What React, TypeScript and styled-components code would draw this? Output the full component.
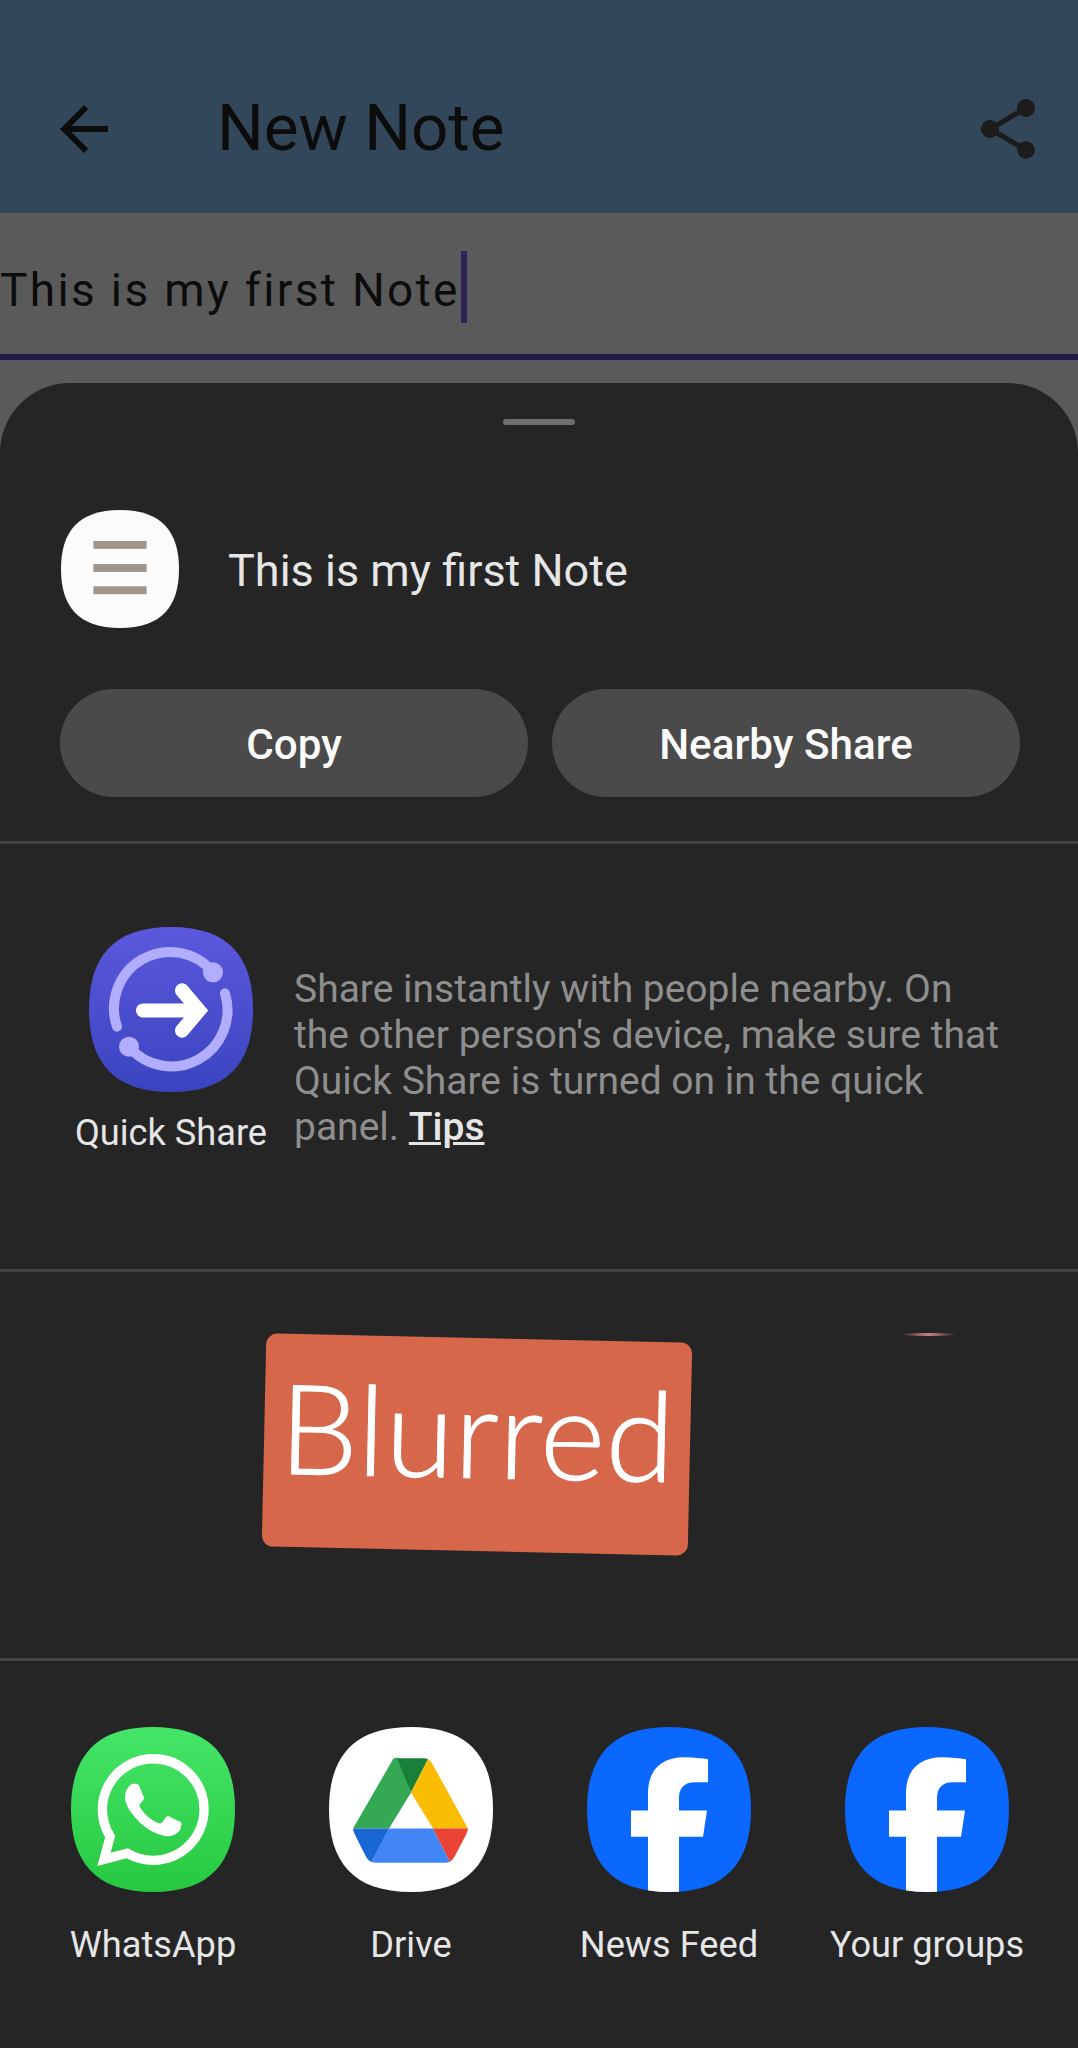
import styled, { createGlobalStyle } from "styled-components";
import { ReactNode } from "react";
import { MdArrowBack, MdShare } from "react-icons/md";
import { SiWhatsapp } from "react-icons/si";

const GlobalStyle = createGlobalStyle`
  html, body {
    margin: 0;
    padding: 0;
    background: #252525;
  }
  * {
    box-sizing: border-box;
  }
`;

const Screen = styled.div`
  width: 1078px;
  height: 2048px;
  display: flex;
  flex-direction: column;
  overflow: hidden;
  background: #5a5a5a;
  font-family: Roboto, "Liberation Sans", sans-serif;
`;

const Toolbar = styled.header`
  height: 213px;
  flex: none;
  display: flex;
  align-items: center;
  padding: 45px 34px 0 48px;
  background: #324759;
  color: #0c0c0c;
`;

const ToolbarTitle = styled.h1`
  flex: 1;
  margin: -3px 0 0 97px;
  font-size: 65.6px;
  font-weight: 400;
  line-height: 76px;
`;

const ShareIcon = styled(MdShare)`
  color: #1c1c1c;
`;

const NoteField = styled.div`
  height: 147px;
  flex: none;
  display: flex;
  align-items: center;
  padding-top: 12px;
  border-bottom: 6px solid #241a47;
  color: #0c0c0c;
  font-size: 46px;
  letter-spacing: 2.35px;
`;

const Caret = styled.span`
  width: 6px;
  height: 72px;
  margin: 0 0 6px 1px;
  background: #2f2358;
`;

const Sheet = styled.section`
  flex: 1;
  margin-top: 23px;
  display: flex;
  flex-direction: column;
  background: #252525;
  border-radius: 70px 70px 0 0;
`;

const Handle = styled.div`
  width: 72px;
  height: 6px;
  margin: 36px auto 0;
  border-radius: 3px;
  background: #6e6e6e;
`;

const PreviewRow = styled.div`
  margin-top: 85px;
  padding: 0 60px 0 61px;
  display: flex;
  align-items: center;
  gap: 49px;

  svg {
    display: block;
  }
`;

const PreviewText = styled.div`
  padding-top: 2px;
  color: #e6e6e6;
  font-size: 45px;
`;

const ActionRow = styled.div`
  margin: 61px 0 44px;
  padding: 0 58px 0 60px;
  display: grid;
  grid-template-columns: 1fr 1fr;
  gap: 24px;
`;

const ActionButton = styled.button`
  height: 108px;
  padding: 2px 0 0;
  border: none;
  border-radius: 54px;
  background: #4a4a4a;
  color: #fafafa;
  font-family: inherit;
  font-size: 42.2px;
  font-weight: 500;
`;

const Divider = styled.hr`
  flex: none;
  width: 100%;
  height: 3px;
  margin: 0;
  border: none;
  background: #434343;
`;

const NearbyPanel = styled.div`
  height: 425px;
  padding: 83px 70px 0 76px;
  display: flex;
  gap: 28px;
`;

const NearbyApp = styled.div`
  width: 190px;
  flex: none;
  display: flex;
  flex-direction: column;
  align-items: center;
  gap: 19px;
`;

const AppLabel = styled.div`
  color: #e6e6e6;
  font-size: 36.2px;
  line-height: 44px;
  white-space: nowrap;
`;

const NearbyText = styled.p`
  margin: 39px 0 0;
  color: #8e8e8e;
  font-size: 39px;
  line-height: 46px;
`;

const TipsLink = styled.a`
  color: #e6e6e6;
  font-weight: 500;
  text-decoration: underline;
`;

const SuggestionPanel = styled.div`
  height: 386px;
  position: relative;
  padding: 66px 0 0 264px;
`;

const BlurredCard = styled.div`
  width: 426px;
  height: 213px;
  padding-top: 17px;
  text-align: center;
  background: #d6674a;
  border-radius: 11px;
  color: #fff;
  font-family: Lato, sans-serif;
  font-size: 125px;
  font-weight: 300;
  line-height: 150px;
  letter-spacing: 0.4px;
  -webkit-text-stroke: 1px #fff;
  transform: rotate(1.25deg);
`;

const RedSliver = styled.span`
  position: absolute;
  left: 900px;
  top: 61px;
  width: 57px;
  height: 3px;
  border-radius: 50%;
  background: linear-gradient(90deg, transparent, #c97f80 50%, transparent);
`;

const AppsGrid = styled.div`
  padding: 66px 22px 0 24px;
  display: grid;
  grid-template-columns: repeat(4, 258px);
`;

const AppCell = styled.div`
  display: flex;
  flex-direction: column;
  align-items: center;
  gap: 31px;
`;

const IconFrame = styled.div`
  position: relative;
  width: 164px;
  height: 165px;

  svg {
    display: block;
  }
`;

const GlyphSlot = styled.div`
  position: absolute;
  inset: 0;
  display: flex;
  align-items: center;
  justify-content: center;
  color: #fff;
`;

const SQUIRCLE =
  "M82 0C140 0 164 30 164 82C164 134 140 164 82 164C24 164 0 134 0 82C0 30 24 0 82 0Z";

function AppIcon({ id, fill, stops, children }: { id: string; fill?: string; stops?: [string, string]; children?: ReactNode }) {
  return (
    <svg width="164" height="165" viewBox="0 0 164 164" preserveAspectRatio="none">
      <defs>
        <clipPath id={`${id}-clip`}>
          <path d={SQUIRCLE} />
        </clipPath>
        {stops && (
          <linearGradient id={`${id}-bg`} x1="0" y1="0" x2="0" y2="1">
            <stop offset="0" stopColor={stops[0]} />
            <stop offset="1" stopColor={stops[1]} />
          </linearGradient>
        )}
      </defs>
      <g clipPath={`url(#${id}-clip)`}>
        <rect width="164" height="164" fill={stops ? `url(#${id}-bg)` : fill} />
        {children}
      </g>
    </svg>
  );
}

function DocIcon() {
  return (
    <svg width="118" height="118" viewBox="0 0 164 164">
      <path d={SQUIRCLE} fill="#fbfbfb" />
      <g fill="#a0948b">
        <rect x="45" y="43" width="74" height="11" />
        <rect x="45" y="75" width="74" height="11" />
        <rect x="45" y="106" width="74" height="11" />
      </g>
    </svg>
  );
}

function QuickShareIcon() {
  return (
    <AppIcon id="quick" stops={["#5c58dd", "#3a44bf"]}>
      <g fill="none" stroke="#b1aeff" strokeWidth="10" strokeLinecap="round">
        <path d="M28 99A56 56 0 0 1 124 45" />
        <path d="M136 66A56 56 0 0 1 40 119" />
      </g>
      <circle cx="124" cy="45" r="10" fill="#b1aeff" />
      <circle cx="40" cy="119" r="10" fill="#b1aeff" />
      <g fill="none" stroke="#fff" strokeWidth="14" strokeLinecap="round" strokeLinejoin="miter">
        <path d="M54 83H106" />
        <path d="M93 63L110 83L93 103" />
      </g>
    </AppIcon>
  );
}

function WhatsAppIcon() {
  return (
    <IconFrame>
      <AppIcon id="whatsapp" stops={["#45e668", "#27c840"]} />
      <GlyphSlot>
        <SiWhatsapp size={112} />
      </GlyphSlot>
    </IconFrame>
  );
}

function DriveIcon() {
  return (
    <AppIcon id="drive" fill="#fff">
      <path d="M64 32Q66 30 70 31L82 65L60 101H24Z" fill="#34a853" />
      <path d="M68 31H95Q98 31 99 32L82 65Z" fill="#188038" />
      <path d="M99 32Q101 33 103 36L139 101H104L82 65Z" fill="#fbbc04" />
      <path d="M24 101H60L43 134Q40 134 37 129L26 107Q24 103 24 101Z" fill="#1967d2" />
      <path d="M60 101H104L121 134Q119 135 116 135H48Q44 135 42 134Z" fill="#4285f4" />
      <path d="M104 101H139Q139 103 137 107L126 128Q124 132 121 134Z" fill="#ea4335" />
    </AppIcon>
  );
}

function FacebookIcon({ id }: { id: string }) {
  return (
    <AppIcon id={id} fill="#0a68ff">
      <path
        d="M61 164V109H44V83H61V66C61 42 75 30 97 30C107 30 115 31 121 32V55H108C97 55 92 61 92 71V83H120L116 109H92V164Z"
        fill="#fff"
      />
    </AppIcon>
  );
}

const APPS: { label: string; icon: ReactNode }[] = [
  { label: "WhatsApp", icon: <WhatsAppIcon /> },
  { label: "Drive", icon: <DriveIcon /> },
  { label: "News Feed", icon: <FacebookIcon id="feed" /> },
  { label: "Your groups", icon: <FacebookIcon id="groups" /> },
];

export default function App() {
  return (
    <>
      <GlobalStyle />
      <Screen>
        <Toolbar>
          <MdArrowBack size={72} />
          <ToolbarTitle>New Note</ToolbarTitle>
          <ShareIcon size={72} />
        </Toolbar>
        <NoteField>
          This is my first Note
          <Caret />
        </NoteField>
        <Sheet>
          <Handle />
          <PreviewRow>
            <DocIcon />
            <PreviewText>This is my first Note</PreviewText>
          </PreviewRow>
          <ActionRow>
            <ActionButton>Copy</ActionButton>
            <ActionButton>Nearby Share</ActionButton>
          </ActionRow>
          <Divider />
          <NearbyPanel>
            <NearbyApp>
              <QuickShareIcon />
              <AppLabel>Quick Share</AppLabel>
            </NearbyApp>
            <NearbyText>
              Share instantly with people nearby. On the other person's device, make sure that Quick Share is turned on in the quick panel. <TipsLink>Tips</TipsLink>
            </NearbyText>
          </NearbyPanel>
          <Divider />
          <SuggestionPanel>
            <BlurredCard>Blurred</BlurredCard>
            <RedSliver />
          </SuggestionPanel>
          <Divider />
          <AppsGrid>
            {APPS.map((app) => (
              <AppCell key={app.label}>
                {app.icon}
                <AppLabel>{app.label}</AppLabel>
              </AppCell>
            ))}
          </AppsGrid>
        </Sheet>
      </Screen>
    </>
  );
}
